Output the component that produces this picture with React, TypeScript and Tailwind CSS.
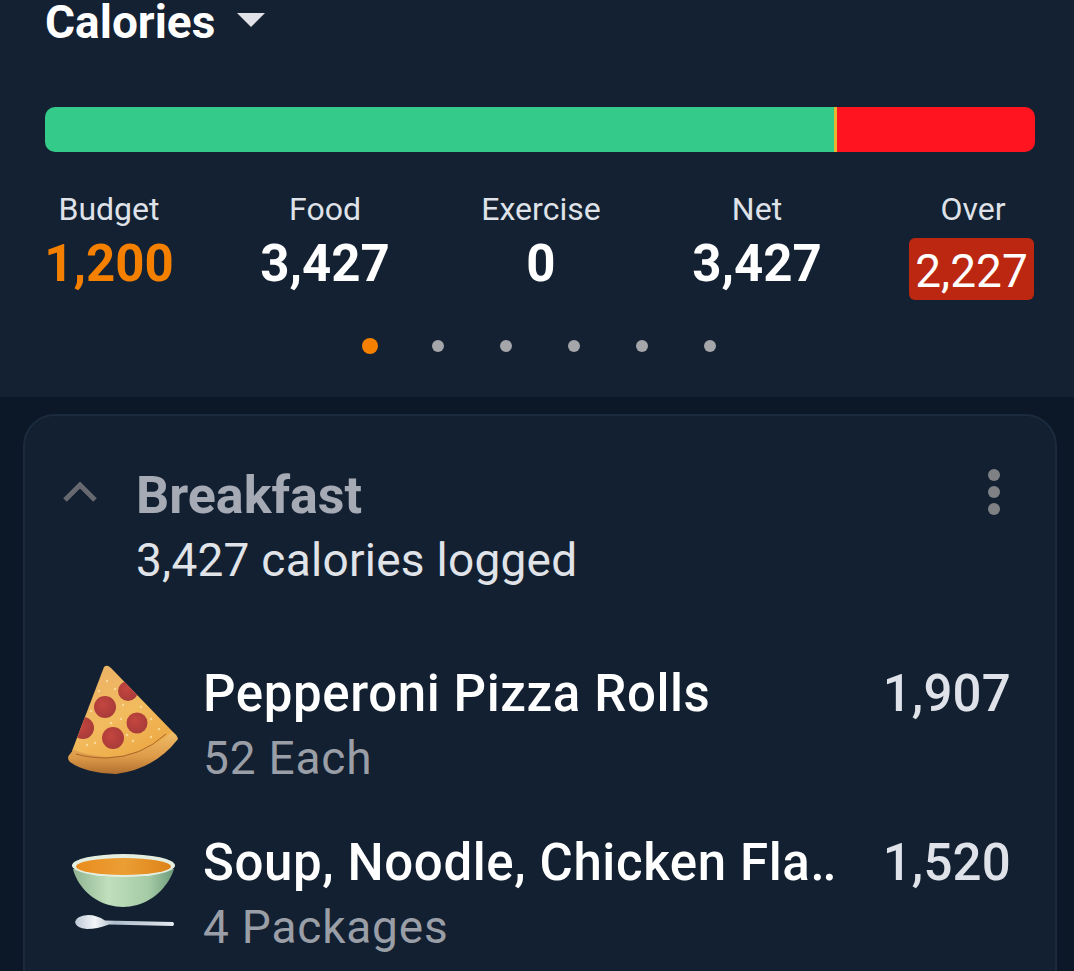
import * as React from "react";

const stats = [
  { label: "Budget", value: "1,200", color: "text-[#f58000]" },
  { label: "Food", value: "3,427", color: "text-white" },
  { label: "Exercise", value: "0", color: "text-white" },
  { label: "Net", value: "3,427", color: "text-white" },
];

const speckles = [
  [44, 20], [36, 30], [52, 28], [60, 44], [28, 50], [58, 58], [88, 58], [70, 80], [32, 82], [24, 84], [88, 76], [48, 62], [96, 68], [64, 74], [78, 46],
];

function PizzaIcon() {
  return (
    <svg width="120" height="120" viewBox="0 0 120 120" className="shrink-0">
      <defs>
        <linearGradient id="cheese" x1="0" y1="0" x2="0.6" y2="1">
          <stop offset="0" stopColor="#e9b068" />
          <stop offset="0.6" stopColor="#f2bb5e" />
          <stop offset="1" stopColor="#eda945" />
        </linearGradient>
        <linearGradient id="crust" x1="0" y1="0" x2="0" y2="1">
          <stop offset="0" stopColor="#f0bd68" />
          <stop offset="0.6" stopColor="#dd9a48" />
          <stop offset="1" stopColor="#b0702f" />
        </linearGradient>
        <radialGradient id="pep" cx="0.4" cy="0.4" r="0.7">
          <stop offset="0" stopColor="#c4453f" />
          <stop offset="1" stopColor="#a53a38" />
        </radialGradient>
        <clipPath id="slice">
          <path d="M41 6 Q44 3 48 7 L111 72 Q85 98 50 99 Q25 99 9 90 Z" />
        </clipPath>
      </defs>
      <path d="M41 6 Q44 3 48 7 L111 72 Q85 98 50 99 Q25 99 9 90 Z" fill="url(#cheese)" />
      <g clipPath="url(#slice)" fill="url(#pep)">
        <circle cx="42" cy="46" r="11" />
        <circle cx="74" cy="62" r="10.5" />
        <circle cx="50" cy="77" r="11" />
        <circle cx="20" cy="67" r="11" />
        <circle cx="65" cy="30" r="10" />
      </g>
      <g fill="#fbe3a8" opacity="0.8">
        {speckles.map(([x, y]) => (
          <circle key={`${x}-${y}`} cx={x} cy={y} r="1.2" />
        ))}
      </g>
      <path d="M11 88 Q14 92 42 96 Q80 96 109 71 Q114 73 115 78 Q92 108 53 113 Q22 112 7 101 Q3 97 7 93 Z" fill="url(#crust)" />
      <path d="M13 93 Q26 97 44 97 Q78 96 103 73" fill="none" stroke="#a8652a" strokeWidth="1" />
    </svg>
  );
}

function SoupIcon() {
  return (
    <svg width="120" height="90" viewBox="0 0 120 90" className="shrink-0">
      <defs>
        <linearGradient id="bowl" x1="0" y1="0" x2="1" y2="0">
          <stop offset="0" stopColor="#8fb492" />
          <stop offset="0.35" stopColor="#c0dfbc" />
          <stop offset="0.75" stopColor="#a5cba6" />
          <stop offset="1" stopColor="#6d9a7a" />
        </linearGradient>
        <linearGradient id="broth" x1="0" y1="0" x2="1" y2="0">
          <stop offset="0" stopColor="#ea8c1d" />
          <stop offset="0.5" stopColor="#eb9e34" />
          <stop offset="1" stopColor="#dd8418" />
        </linearGradient>
        <linearGradient id="spoon" x1="0" y1="0" x2="1" y2="0">
          <stop offset="0" stopColor="#bcc8d6" />
          <stop offset="0.2" stopColor="#f2f5f8" />
          <stop offset="0.4" stopColor="#aebccb" />
          <stop offset="1" stopColor="#e4e9ee" />
        </linearGradient>
      </defs>
      <path d="M10 24 C14 40 28 55 46 60 Q60 64 74 60 C92 55 106 40 111 24 Z" fill="url(#bowl)" />
      <ellipse cx="60.5" cy="20.5" rx="51.5" ry="11.5" fill="#e4eee0" />
      <ellipse cx="60.5" cy="21.5" rx="47.5" ry="8.5" fill="url(#broth)" />
      <path d="M12 77 Q13 71 25 70 Q34 70 42 75.5 L110 77 Q112 79 110 81 L46 79.5 Q34 84 24 84 Q13 83 12 77 Z" fill="url(#spoon)" />
    </svg>
  );
}

function FoodRow({ name, serving, calories, icon }: { name: React.ReactNode; serving: string; calories: string; icon: React.ReactNode }) {
  return (
    <div className="flex h-[169px] items-start">
      <div className="flex h-[118px] w-[120px] shrink-0 items-center justify-center">{icon}</div>
      <div className="ml-5 flex-1">
        <div className="text-[51px] leading-[64px] font-medium tracking-[0.6px] text-white">{name}</div>
        <div className="text-[46px] leading-[64px] tracking-[0.8px] text-[#9a9ea6]">{serving}</div>
      </div>
      <div className="mr-[-1px] text-[51px] leading-[64px] font-medium tracking-[0.2px] text-[#dfe2e8]">{calories}</div>
    </div>
  );
}

export default function App() {
  return (
    <div className="h-[971px] overflow-hidden bg-[#0c1827] font-['Roboto',sans-serif]">
      <div className="h-[397px] bg-[#132132] pt-0 pr-[39px] pl-[45px]">
        <div className="flex h-[44px] items-center">
          <span className="text-[46px] leading-[44px] font-bold text-white">Calories</span>
          <span className="mt-[-4px] ml-[22px] h-0 w-0 border-x-[14px] border-t-[14px] border-x-transparent border-t-[#e0e2e8]" />
        </div>

        <div className="mt-[63px] flex h-[45px] overflow-hidden rounded-[10px]">
          <div className="w-[789px] bg-[#34ca89]" />
          <div className="w-[3px] bg-[#e5b62f]" />
          <div className="flex-1 bg-[#ff141f]" />
        </div>

        <div className="mt-[39px] mr-[-1px] ml-[1px] grid grid-cols-5 gap-x-[90px]">
          {stats.map((s) => (
            <div key={s.label} className="flex flex-col items-center">
              <span className="text-[32px] leading-[36px] text-[#dfe2e8]">{s.label}</span>
              <span className={`mt-[6px] text-[51px] leading-[62px] font-bold ${s.color}`}>{s.value}</span>
            </div>
          ))}
          <div className="flex flex-col items-center">
            <span className="text-[32px] leading-[36px] text-[#dfe2e8]">Over</span>
            <span className="mt-[11px] mr-[3px] flex h-[62px] w-[125px] items-center justify-center rounded-[6px] bg-[#bb2710] pt-[4px] text-[46px] text-white">
              2,227
            </span>
          </div>
        </div>

        <div className="mt-[38px] flex items-center justify-center gap-[52px]">
          <span className="h-4 w-4 rounded-full bg-[#f58000]" />
          {[0, 1, 2, 3, 4].map((i) => (
            <span key={i} className="flex h-4 w-4 items-center justify-center">
              <span className="h-3 w-3 rounded-full bg-[#a4a6aa]" />
            </span>
          ))}
        </div>
      </div>

      <div className="mt-[17px] mr-[17px] ml-[23px] h-[700px] rounded-t-[32px] border-2 border-[#1b2a3c] bg-[#122031] pt-[50px] pr-[45px] pl-[37px]">
        <div className="flex items-start">
          <svg width="36" height="24" viewBox="0 0 36 24" className="mt-[13px] shrink-0" fill="none" stroke="#666a6f" strokeWidth="5">
            <path d="M3 21 L18 6 L33 21" />
          </svg>
          <div className="ml-[38px] flex-1">
            <div className="text-[52px] leading-[60px] font-bold text-[#a5aab4]">Breakfast</div>
            <div className="text-[46px] leading-[68px] tracking-[0.25px] text-[#e0e3e8]">3,427 calories logged</div>
          </div>
          <div className="mt-[3px] mr-[10px] flex flex-col gap-[5px]">
            <span className="h-3 w-3 rounded-full bg-[#7f8184]" />
            <span className="h-3 w-3 rounded-full bg-[#7f8184]" />
            <span className="h-3 w-3 rounded-full bg-[#7f8184]" />
          </div>
        </div>

        <div className="mt-[68px] pl-[1px]">
          <FoodRow name="Pepperoni Pizza Rolls" serving="52 Each" calories="1,907" icon={<PizzaIcon />} />
          <FoodRow
            name={
              <>
                Soup, Noodle, Chicken Fla<span className="tracking-[-2px]">..</span>
              </>
            }
            serving="4 Packages"
            calories="1,520"
            icon={<SoupIcon />}
          />
        </div>
      </div>
    </div>
  );
}
